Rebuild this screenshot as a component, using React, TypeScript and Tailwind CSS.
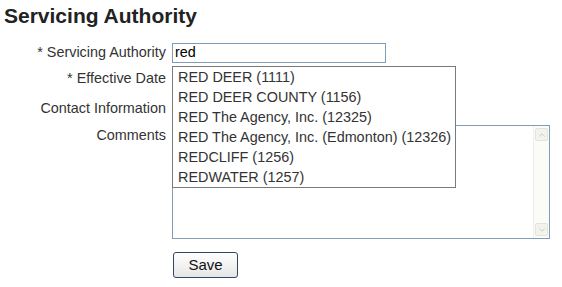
import { ChevronUp, ChevronDown } from 'lucide-react'

const suggestions = [
  'RED DEER (1111)',
  'RED DEER COUNTY (1156)',
  'RED The Agency, Inc. (12325)',
  'RED The Agency, Inc. (Edmonton) (12326)',
  'REDCLIFF (1256)',
  'REDWATER (1257)',
]

export default function App() {
  return (
    <div className="relative w-[562px] h-[287px] bg-white text-[#333] font-['Liberation_Sans',Arial,sans-serif]">
      <h1 className="pl-[4px] pt-[4px] text-[21px] leading-[24px] font-bold text-[#222]">Servicing Authority</h1>

      <div className="mt-[15px] flex flex-col text-[14.4px]">
        {/* Servicing Authority */}
        <div className="flex items-center h-[20px]">
          <label className="w-[166px] text-right">* Servicing Authority</label>
          <input
            defaultValue="red"
            className="ml-[6px] w-[214px] h-[20px] border border-[#7f9db9] px-[2px] text-[14.4px] text-black outline-none"
          />
        </div>

        {/* Effective Date */}
        <div className="flex items-center h-[20px] mt-[6px]">
          <label className="w-[166px] text-right">* Effective Date</label>
        </div>

        {/* Contact Information */}
        <div className="flex items-center h-[20px] mt-[10px]">
          <label className="w-[166px] text-right">Contact Information</label>
        </div>

        {/* Comments */}
        <div className="flex items-start mt-[6px]">
          <label className="w-[166px] text-right leading-[19px] pt-[1px]">Comments</label>
          <div className="ml-[6px] w-[378px] h-[114px] border border-[#7f9db9] flex">
            <div className="flex-1" />
            <div className="w-[16px] bg-[#fbfbf8] border-l border-[#f0f0ea] flex flex-col justify-between py-[2px]">
              <div className="h-[13px] mx-[1px] bg-[#f3f3ee] border border-[#e4e4dc] rounded-[2px] flex items-center justify-center">
                <ChevronUp className="w-[10px] h-[10px] text-[#c4c4bc]" strokeWidth={2} />
              </div>
              <div className="h-[13px] mx-[1px] bg-[#f3f3ee] border border-[#e4e4dc] rounded-[2px] flex items-center justify-center">
                <ChevronDown className="w-[10px] h-[10px] text-[#c4c4bc]" strokeWidth={2} />
              </div>
            </div>
          </div>
        </div>

        {/* Save */}
        <div className="mt-[13px] pl-[173px]">
          <button className="w-[65px] h-[26px] border border-[#2d4866] rounded-[3px] bg-gradient-to-b from-white to-[#e6e6e6] text-[15px] text-[#111]">
            Save
          </button>
        </div>
      </div>

      {/* Autocomplete dropdown */}
      <ul className="absolute left-[172px] top-[66px] w-[284px] border border-[#7a7a7a] bg-white text-[14.4px] text-[#333]">
        {suggestions.map(s => (
          <li key={s} className="h-[20px] leading-[20px] pl-[5px] whitespace-nowrap">{s}</li>
        ))}
      </ul>
    </div>
  )
}
